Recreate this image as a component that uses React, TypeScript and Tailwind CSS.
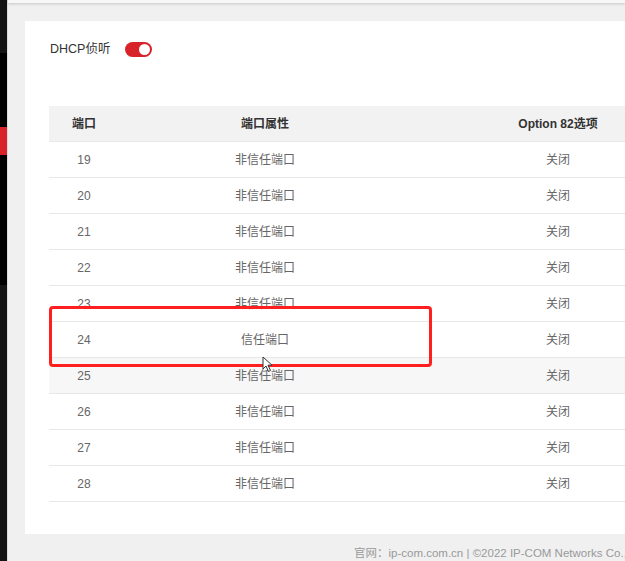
import React from "react";

const rows = [
  { port: 19, attr: "非信任端口", opt: "关闭" },
  { port: 20, attr: "非信任端口", opt: "关闭" },
  { port: 21, attr: "非信任端口", opt: "关闭" },
  { port: 22, attr: "非信任端口", opt: "关闭" },
  { port: 23, attr: "非信任端口", opt: "关闭" },
  { port: 24, attr: "信任端口", opt: "关闭" },
  { port: 25, attr: "非信任端口", opt: "关闭" },
  { port: 26, attr: "非信任端口", opt: "关闭" },
  { port: 27, attr: "非信任端口", opt: "关闭" },
  { port: 28, attr: "非信任端口", opt: "关闭" },
];

const font = { fontFamily: '"Liberation Sans", "Noto Sans CJK SC", sans-serif' };

const App = () => {
  return (
    <div className="relative flex w-[625px] h-[561px] overflow-hidden bg-[#f0f0f0]" style={font}>
      {/* side nav edge */}
      <div className="flex flex-col w-[7px] shrink-0">
        <div className="h-[53px] bg-[#141414]" />
        <div className="h-[74px] bg-black" />
        <div className="h-[28px] bg-[#d9232a]" />
        <div className="h-[130px] bg-black" />
        <div className="flex-1 bg-[#141414]" />
      </div>

      <main className="flex flex-col flex-1 min-w-0 border-l border-[#dcdcdc]">
        <div className="h-[3px] bg-[#f7f7f7] shadow-[0_1px_3px_rgba(0,0,0,0.18)]" />

        <div className="flex-1 pt-[18px] pl-[17px]">
          <section className="w-[700px] h-[513px] bg-white pl-[25px] pt-[18px]">
            {/* DHCP snooping switch */}
            <div className="flex items-center h-[20px]">
              <span className="w-[75px] text-[12.5px] text-[#333]">DHCP侦听</span>
              <button className="relative w-[27px] h-[15px] rounded-full bg-[#d9232a]">
                <span className="absolute right-[2px] top-[2px] w-[11px] h-[11px] rounded-full bg-white" />
              </button>
            </div>

            <div className="-ml-px mt-[47px] w-[656px] text-[12px]">
              <div className="grid grid-cols-[70px_292px_294px] h-[36px] items-center bg-[#f2f2f2] font-semibold text-[#333] border-b border-[#e8e8e8]">
                <span className="text-center">端口</span>
                <span className="text-center">端口属性</span>
                <span className="text-center">Option 82选项</span>
              </div>
              {rows.map((r) => (
                <div
                  key={r.port}
                  className={
                    r.port === 25
                      ? "grid grid-cols-[70px_292px_294px] h-[36px] items-center text-[#666] border-b border-[#e8e8e8] bg-[#f7f7f7]"
                      : "grid grid-cols-[70px_292px_294px] h-[36px] items-center text-[#666] border-b border-[#e8e8e8]"
                  }
                >
                  <span className="text-center">{r.port}</span>
                  <span className="text-center">{r.attr}</span>
                  <span className="text-center">{r.opt}</span>
                </div>
              ))}
            </div>
          </section>

          <p className="pl-[329px] pt-[11px] whitespace-nowrap text-[11.5px] leading-[16px] text-[#999]">
            官网：ip-com.com.cn | ©2022 IP-COM Networks Co., Ltd.
          </p>
        </div>
      </main>

      {/* annotation box */}
      <div className="absolute left-[49px] top-[306px] w-[383px] h-[61px] border-[3px] border-[#ff1f1f] rounded-[4px]" />

      {/* mouse cursor */}
      <svg className="absolute left-[262px] top-[356px]" width="11" height="17" viewBox="0 0 11 17">
        <path d="M1 1 L1 13 L4 10 L6.5 15.5 L8.5 14.5 L6 9.2 L10 9.2 Z" fill="white" stroke="#333" strokeWidth="1" strokeLinejoin="round" />
      </svg>
    </div>
  );
};

export default App;
